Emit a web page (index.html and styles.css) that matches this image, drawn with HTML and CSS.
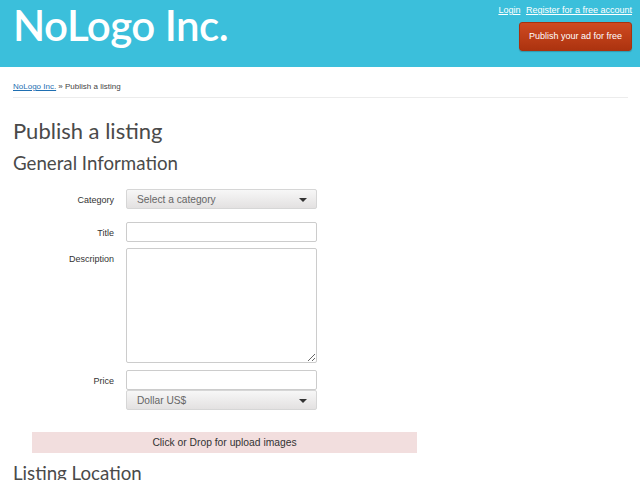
FILE: index.html
```html
<!DOCTYPE html>
<html lang="en">
<head>
    <meta charset="UTF-8">
    <title>Publish a listing - NoLogo Inc.</title>
    <link rel="stylesheet" href="styles.css">
</head>
<body>
    <!-- Cabecera -->
    <div class="header">
        <div class="logo">NoLogo Inc.</div>
        <div class="header-right">
            <div class="user-links">
                <a href="#">Login</a>
                <a href="#">Register for a free account</a>
            </div>
            <a class="publish-btn" href="#">Publish your ad for free</a>
        </div>
    </div>

    <div class="content">
        <div class="breadcrumb">
            <a href="#">NoLogo Inc.</a> &raquo; Publish a listing
        </div>

        <h1>Publish a listing</h1>
        <h2>General Information</h2>

        <form class="item-form">
            <label class="field-label">Category</label>
            <div class="field category-field">
                <div class="select-box">Select a category<span class="caret"></span></div>
            </div>

            <label class="field-label">Title</label>
            <div class="field">
                <input type="text" class="text-input">
            </div>

            <label class="field-label">Description</label>
            <div class="field">
                <textarea class="text-area"></textarea>
            </div>

            <label class="field-label">Price</label>
            <div class="field">
                <input type="text" class="text-input price-input">
                <div class="select-box currency">Dollar US$<span class="caret"></span></div>
            </div>
        </form>

        <div class="upload-box">Click or Drop for upload images</div>

        <h2 class="location-title">Listing Location</h2>
    </div>
</body>
</html>
```

FILE: styles.css
```css
body {
    margin: 0;
    padding: 0;
    font-family: "Liberation Sans", Arial, sans-serif;
    color: #333;
    background-color: #fff;
}
a {
    color: #1f6fb2;
}
.header {
    background-color: #3bbfdb;
    height: 67px;
    display: flex;
    justify-content: space-between;
    padding: 0 8px 0 13px;
}
.logo {
    font-family: Lato, sans-serif;
    font-weight: 600;
    font-size: 42px;
    letter-spacing: -0.5px;
    color: #fff;
    line-height: 1;
    padding-top: 4px;
}
.header-right {
    display: flex;
    flex-direction: column;
    align-items: flex-end;
    padding-top: 5px;
}
.user-links {
    font-size: 9px;
}
.user-links a {
    color: #fff;
    margin-left: 3px;
}
.publish-btn {
    display: block;
    margin-top: 7px;
    padding: 0 9px;
    height: 27px;
    line-height: 27px;
    font-size: 9px;
    color: #fff;
    text-decoration: none;
    background: linear-gradient(#cf4a21, #ac330f);
    border: 1px solid #a8320f;
    border-radius: 3px;
    box-shadow: 0 1px 1px rgba(0, 0, 0, 0.2);
}
.content {
    padding: 0 12px 0 13px;
}
.breadcrumb {
    font-size: 8px;
    color: #444;
    padding: 15px 0 6px;
    border-bottom: 1px solid #ececec;
}
h1 {
    font-family: Lato, sans-serif;
    font-weight: normal;
    font-size: 22px;
    color: #4a4a4a;
    margin: 19px 0 0;
}
h2 {
    font-family: Lato, sans-serif;
    font-weight: normal;
    font-size: 18.7px;
    color: #4a4a4a;
    margin: 8px 0 15px;
}
.item-form {
    display: grid;
    grid-template-columns: 101px 191px;
    column-gap: 12px;
    row-gap: 6px;
}
.field-label {
    font-size: 9px;
    text-align: right;
    padding-top: 6px;
    color: #333;
}
.field {
    display: flex;
    flex-direction: column;
}
.category-field {
    margin-bottom: 7px;
}
.text-input {
    box-sizing: border-box;
    width: 191px;
    height: 20px;
    margin: 0;
    border: 1px solid #ccc;
    border-radius: 2px;
}
.select-box {
    position: relative;
    box-sizing: border-box;
    height: 20px;
    line-height: 19px;
    padding-left: 10px;
    font-size: 10.2px;
    color: #666;
    background: linear-gradient(#f7f7f7, #e3e1e1);
    border: 1px solid #d6d6d6;
    border-radius: 2px;
}
.caret {
    position: absolute;
    right: 9px;
    top: 8px;
    border-left: 4px solid transparent;
    border-right: 4px solid transparent;
    border-top: 4px solid #333;
}
.text-area {
    box-sizing: border-box;
    width: 191px;
    height: 115px;
    margin: 0 0 1px;
    border: 1px solid #ccc;
    border-radius: 2px;
}
.upload-box {
    margin: 22px 0 0 19px;
    width: 385px;
    height: 21px;
    line-height: 21px;
    text-align: center;
    font-size: 10.3px;
    color: #333;
    background-color: #f2dede;
}
.location-title {
    margin-top: 9px;
}
```
